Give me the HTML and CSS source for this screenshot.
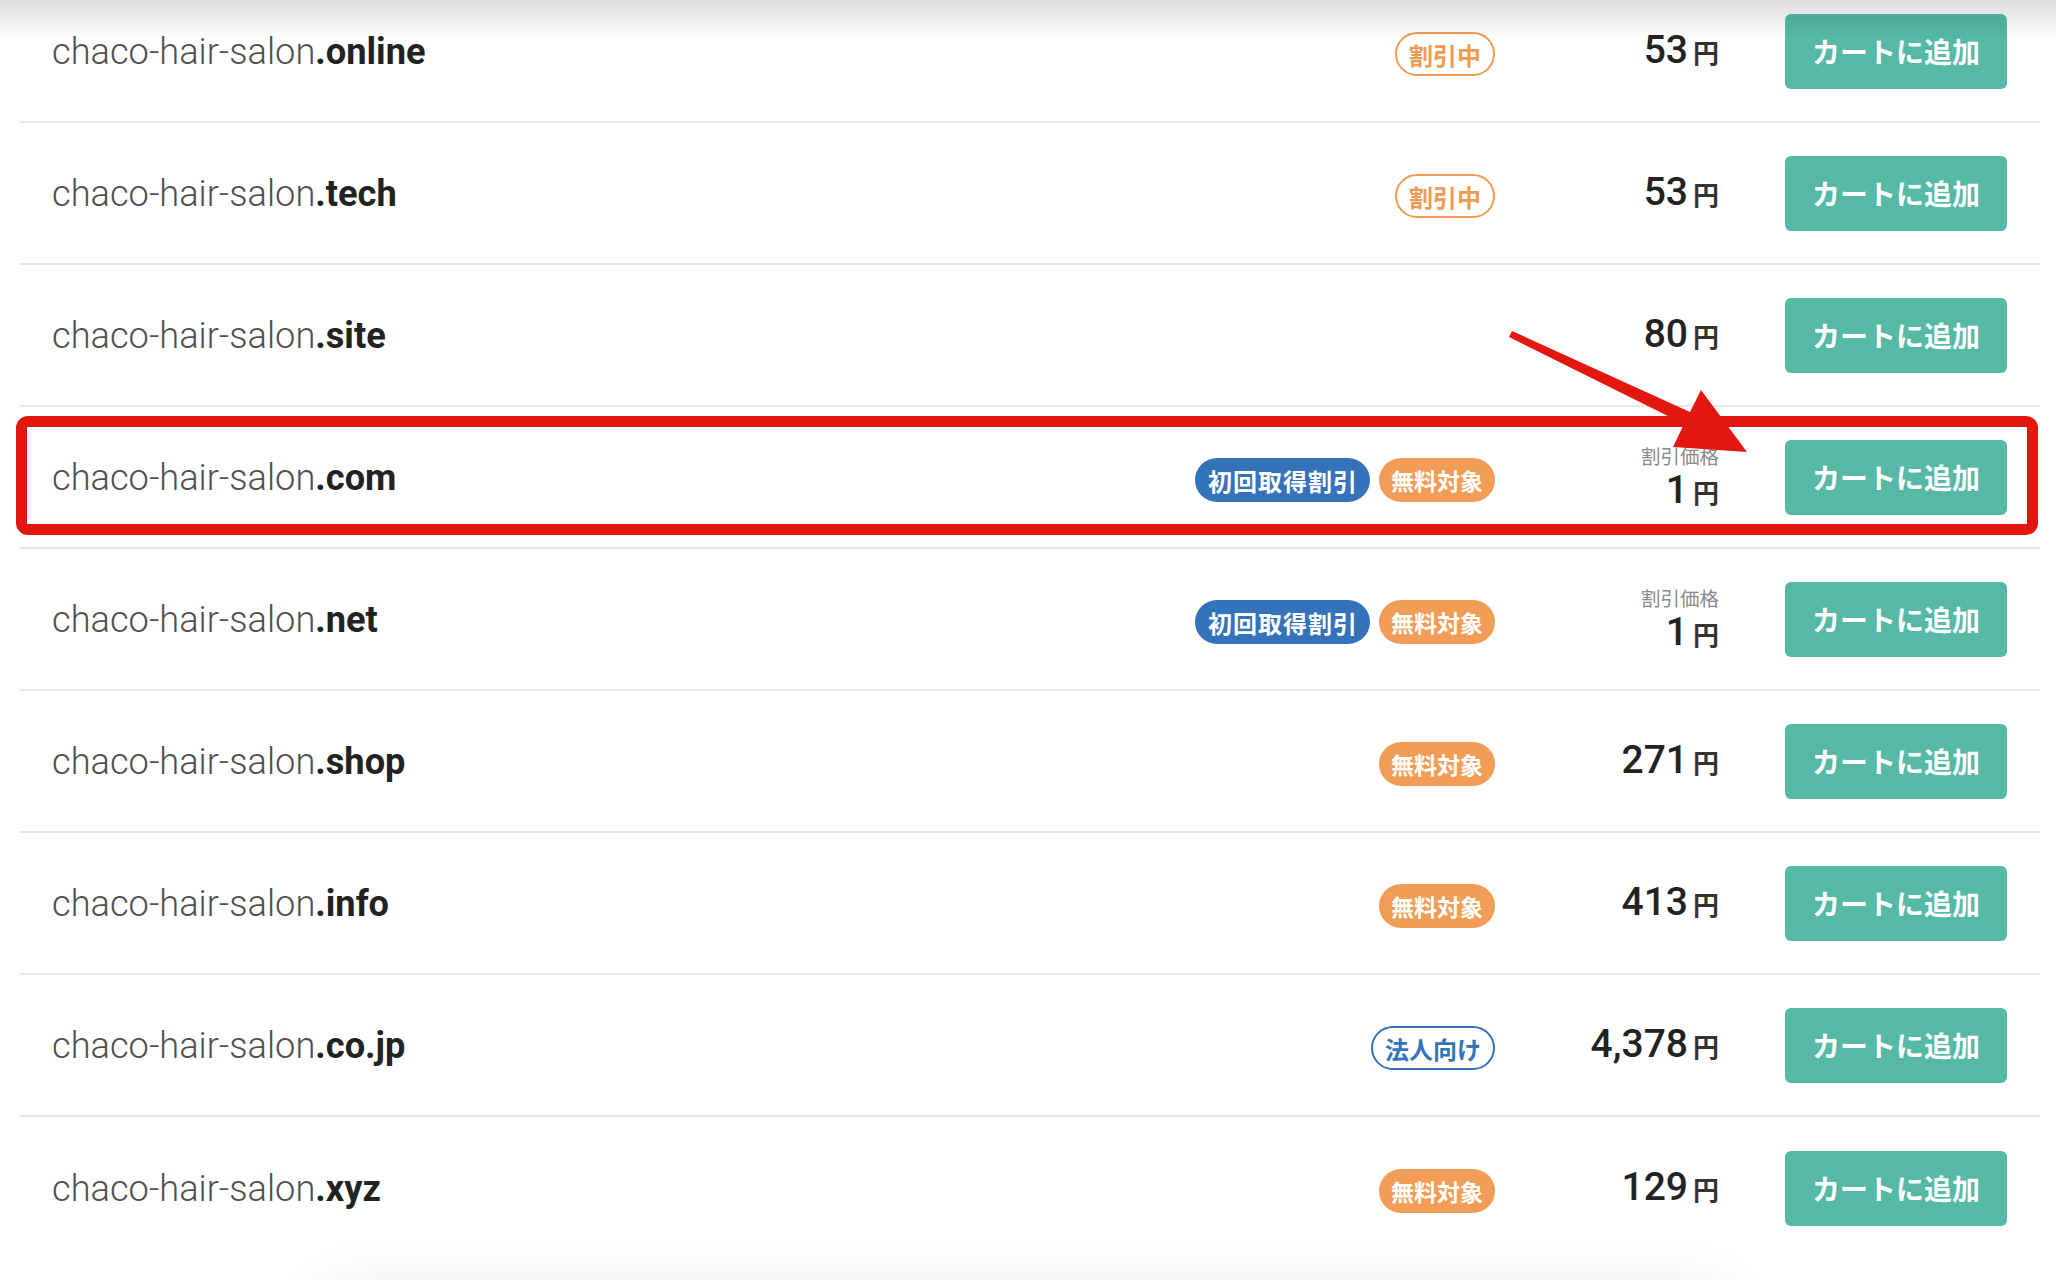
FILE: index.html
```html
<!DOCTYPE html>
<html>
<head>
  <meta charset="utf-8">
  <title>ドメイン検索結果</title>
  <link rel="stylesheet" href="styles.css">
</head>
<body>
  <div class="top-shade"></div>

  <main class="results">
    <ul class="domain-list">
      <li class="domain-row">
        <div class="domain-name">chaco-hair-salon<b>.online</b></div>
        <div class="tags"><span class="tag tag-sale">割引中</span></div>
        <div class="price"><span class="price-value"><span class="amount">53</span><span class="yen">円</span></span></div>
        <button class="add-cart">カートに追加</button>
      </li>
      <li class="domain-row">
        <div class="domain-name">chaco-hair-salon<b>.tech</b></div>
        <div class="tags"><span class="tag tag-sale">割引中</span></div>
        <div class="price"><span class="price-value"><span class="amount">53</span><span class="yen">円</span></span></div>
        <button class="add-cart">カートに追加</button>
      </li>
      <li class="domain-row">
        <div class="domain-name">chaco-hair-salon<b>.site</b></div>
        <div class="tags"></div>
        <div class="price"><span class="price-value"><span class="amount">80</span><span class="yen">円</span></span></div>
        <button class="add-cart">カートに追加</button>
      </li>
      <li class="domain-row">
        <div class="domain-name">chaco-hair-salon<b>.com</b></div>
        <div class="tags">
          <span class="tag tag-first">初回取得割引</span>
          <span class="tag tag-free">無料対象</span>
        </div>
        <div class="price">
          <span class="price-label">割引価格</span>
          <span class="price-value"><span class="amount">1</span><span class="yen">円</span></span>
        </div>
        <button class="add-cart">カートに追加</button>
      </li>
      <li class="domain-row">
        <div class="domain-name">chaco-hair-salon<b>.net</b></div>
        <div class="tags">
          <span class="tag tag-first">初回取得割引</span>
          <span class="tag tag-free">無料対象</span>
        </div>
        <div class="price">
          <span class="price-label">割引価格</span>
          <span class="price-value"><span class="amount">1</span><span class="yen">円</span></span>
        </div>
        <button class="add-cart">カートに追加</button>
      </li>
      <li class="domain-row">
        <div class="domain-name">chaco-hair-salon<b>.shop</b></div>
        <div class="tags"><span class="tag tag-free">無料対象</span></div>
        <div class="price"><span class="price-value"><span class="amount">271</span><span class="yen">円</span></span></div>
        <button class="add-cart">カートに追加</button>
      </li>
      <li class="domain-row">
        <div class="domain-name">chaco-hair-salon<b>.info</b></div>
        <div class="tags"><span class="tag tag-free">無料対象</span></div>
        <div class="price"><span class="price-value"><span class="amount">413</span><span class="yen">円</span></span></div>
        <button class="add-cart">カートに追加</button>
      </li>
      <li class="domain-row">
        <div class="domain-name">chaco-hair-salon<b>.co.jp</b></div>
        <div class="tags"><span class="tag tag-corp">法人向け</span></div>
        <div class="price"><span class="price-value"><span class="amount">4,378</span><span class="yen">円</span></span></div>
        <button class="add-cart">カートに追加</button>
      </li>
      <li class="domain-row">
        <div class="domain-name">chaco-hair-salon<b>.xyz</b></div>
        <div class="tags"><span class="tag tag-free">無料対象</span></div>
        <div class="price"><span class="price-value"><span class="amount">129</span><span class="yen">円</span></span></div>
        <button class="add-cart">カートに追加</button>
      </li>
    </ul>
  </main>

  <!-- shadow of the summary card just below the fold -->
  <div class="bottom-shade"></div>

  <!-- annotation: red frame + arrow pointing at the .com button -->
  <div class="highlight"></div>
  <svg class="arrow" width="2056" height="1280" viewBox="0 0 2056 1280">
    <polygon points="1512,331 1690,412 1701,390 1747,452 1673,447 1684,424 1509,337" fill="#e3170f"/>
  </svg>
</body>
</html>
```

FILE: styles.css
```css
* {
  box-sizing: border-box;
}

html, body {
  height: 100%;
  overflow: hidden;
}

body {
  margin: 0;
  background: #fff;
  font-family: Roboto, "Noto Sans CJK JP", sans-serif;
}

.top-shade {
  position: fixed;
  top: 0;
  left: 0;
  right: 0;
  height: 40px;
  background: linear-gradient(rgba(0, 0, 0, 0.13), rgba(0, 0, 0, 0));
  z-index: 5;
  pointer-events: none;
}

.bottom-shade {
  position: fixed;
  left: 0;
  right: 0;
  bottom: 0;
  height: 70px;
  overflow: hidden;
  pointer-events: none;
}

.bottom-shade::after {
  content: "";
  position: absolute;
  left: 320px;
  top: 82px;
  width: 1410px;
  height: 200px;
  border-radius: 30px;
  background: #fff;
  box-shadow: 0 0 60px rgba(0, 0, 0, 0.11);
}

.domain-list {
  list-style: none;
  margin: -19px 16px 0 20px;
  padding: 0;
}

.domain-row {
  display: flex;
  align-items: center;
  height: 142px;
  padding: 0 33px 0 32px;
  border-bottom: 2px solid #e6e6e6;
}

.domain-row:last-child {
  border-bottom: none;
}

.domain-name {
  flex: 1;
  font-size: 36.2px;
  font-weight: 300;
  color: #505050;
}

.domain-name b {
  font-weight: 700;
  color: #222;
}

.tags {
  display: flex;
  gap: 9px;
  margin-top: 6px;
}

.tag {
  display: inline-flex;
  align-items: center;
  justify-content: center;
  height: 44px;
  padding: 0 12px;
  border-radius: 22px;
  font-family: "Noto Sans CJK JP", sans-serif;
  font-size: 24px;
  font-weight: 700;
  color: #fff;
}

.tag-sale {
  border: 2px solid #f09a52;
  color: #f09a52;
  background: #fff;
}

.tag-corp {
  border: 2px solid #3473b9;
  color: #3473b9;
  background: #fff;
}

.tag-first {
  background: #3473b9;
  letter-spacing: 1px;
  padding-left: 13px;
}

.tag-free {
  background: #f29d57;
  font-size: 23px;
}

.price {
  width: 224px;
  margin-right: 66px;
  display: flex;
  flex-direction: column;
  align-items: flex-end;
}

.price-label {
  font-family: "Noto Sans CJK JP", sans-serif;
  font-size: 19.5px;
  color: #8a8a8a;
  line-height: 26px;
  margin-bottom: 1px;
}

.price-value {
  display: flex;
  align-items: baseline;
  line-height: 40px;
}

.amount {
  font-size: 39px;
  font-weight: 500;
  color: #222;
}

.yen {
  margin-left: 5px;
  font-family: "Noto Sans CJK JP", sans-serif;
  font-size: 26px;
  font-weight: 700;
  color: #333;
}

.add-cart {
  width: 222px;
  height: 75px;
  border: none;
  border-radius: 6px;
  background: #55b9a6;
  color: #fff;
  font-family: "Noto Sans CJK JP", sans-serif;
  font-size: 28px;
  font-weight: 700;
  cursor: pointer;
}

.highlight {
  position: absolute;
  left: 16px;
  top: 416px;
  width: 2022px;
  height: 119px;
  border: 11px solid #e3170f;
  border-radius: 12px;
  pointer-events: none;
}

.arrow {
  position: absolute;
  left: 0;
  top: 0;
  pointer-events: none;
}
```
